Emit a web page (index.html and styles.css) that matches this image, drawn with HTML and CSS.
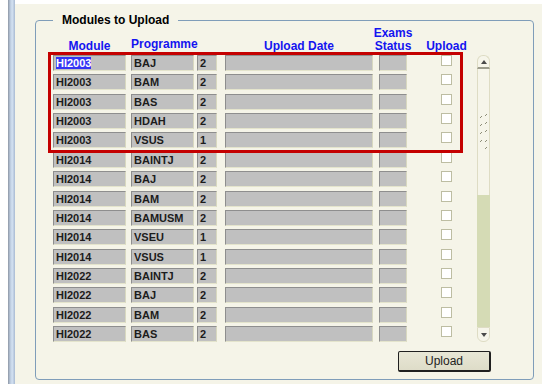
FILE: index.html
```html
<!DOCTYPE html>
<html lang="en">
    <head>
        <meta charset="UTF-8" />
        <meta name="viewport" content="width=device-width, initial-scale=1.0" />
        <title>Modules to Upload</title>

        <link rel="stylesheet" href="styles.css">
    </head>
    <body>
        <div class="frame"></div>
        <main class="panel">
            <fieldset class="group">
                <legend>Modules to Upload</legend>

                <div class="row head">
                    <span class="c-mod">Module</span>
                    <span class="c-prog raised">Programme</span>
                    <span class="c-num"></span>
                    <span class="c-date">Upload Date</span>
                    <span class="c-exam">Exams<br>Status</span>
                    <span class="c-chk">Upload</span>
                </div>

                <div class="body">
                    <div class="list">
                        <div class="row"><span class="cell c-mod"><b class="selected">HI2003</b></span><span class="cell c-prog">BAJ</span><span class="cell c-num">2</span><span class="cell c-date"></span><span class="cell c-exam"></span><span class="c-chk"><i class="box"></i></span></div>
                        <div class="row"><span class="cell c-mod">HI2003</span><span class="cell c-prog">BAM</span><span class="cell c-num">2</span><span class="cell c-date"></span><span class="cell c-exam"></span><span class="c-chk"><i class="box"></i></span></div>
                        <div class="row"><span class="cell c-mod">HI2003</span><span class="cell c-prog">BAS</span><span class="cell c-num">2</span><span class="cell c-date"></span><span class="cell c-exam"></span><span class="c-chk"><i class="box"></i></span></div>
                        <div class="row"><span class="cell c-mod">HI2003</span><span class="cell c-prog">HDAH</span><span class="cell c-num">2</span><span class="cell c-date"></span><span class="cell c-exam"></span><span class="c-chk"><i class="box"></i></span></div>
                        <div class="row"><span class="cell c-mod">HI2003</span><span class="cell c-prog">VSUS</span><span class="cell c-num">1</span><span class="cell c-date"></span><span class="cell c-exam"></span><span class="c-chk"><i class="box"></i></span></div>
                        <div class="row"><span class="cell c-mod">HI2014</span><span class="cell c-prog">BAINTJ</span><span class="cell c-num">2</span><span class="cell c-date"></span><span class="cell c-exam"></span><span class="c-chk"><i class="box"></i></span></div>
                        <div class="row"><span class="cell c-mod">HI2014</span><span class="cell c-prog">BAJ</span><span class="cell c-num">2</span><span class="cell c-date"></span><span class="cell c-exam"></span><span class="c-chk"><i class="box"></i></span></div>
                        <div class="row"><span class="cell c-mod">HI2014</span><span class="cell c-prog">BAM</span><span class="cell c-num">2</span><span class="cell c-date"></span><span class="cell c-exam"></span><span class="c-chk"><i class="box"></i></span></div>
                        <div class="row"><span class="cell c-mod">HI2014</span><span class="cell c-prog">BAMUSM</span><span class="cell c-num">2</span><span class="cell c-date"></span><span class="cell c-exam"></span><span class="c-chk"><i class="box"></i></span></div>
                        <div class="row"><span class="cell c-mod">HI2014</span><span class="cell c-prog">VSEU</span><span class="cell c-num">1</span><span class="cell c-date"></span><span class="cell c-exam"></span><span class="c-chk"><i class="box"></i></span></div>
                        <div class="row"><span class="cell c-mod">HI2014</span><span class="cell c-prog">VSUS</span><span class="cell c-num">1</span><span class="cell c-date"></span><span class="cell c-exam"></span><span class="c-chk"><i class="box"></i></span></div>
                        <div class="row"><span class="cell c-mod">HI2022</span><span class="cell c-prog">BAINTJ</span><span class="cell c-num">2</span><span class="cell c-date"></span><span class="cell c-exam"></span><span class="c-chk"><i class="box"></i></span></div>
                        <div class="row"><span class="cell c-mod">HI2022</span><span class="cell c-prog">BAJ</span><span class="cell c-num">2</span><span class="cell c-date"></span><span class="cell c-exam"></span><span class="c-chk"><i class="box"></i></span></div>
                        <div class="row"><span class="cell c-mod">HI2022</span><span class="cell c-prog">BAM</span><span class="cell c-num">2</span><span class="cell c-date"></span><span class="cell c-exam"></span><span class="c-chk"><i class="box"></i></span></div>
                        <div class="row"><span class="cell c-mod">HI2022</span><span class="cell c-prog">BAS</span><span class="cell c-num">2</span><span class="cell c-date"></span><span class="cell c-exam"></span><span class="c-chk"><i class="box"></i></span></div>

                        <div class="mark"></div>
                    </div>

                    <div class="scroll">
                        <div class="sb-up"><i class="arrow up"></i></div>
                        <div class="sb-thumb">
                            <svg width="9" height="36" viewBox="0 0 9 36">
                                <path d="M1 4 L3 2 M6 2 L8 0 M1 12 L3 10 M6 10 L8 8 M1 20 L3 18 M6 18 L8 16 M1 28 L3 26 M6 28 L8 26 M6 35 L8 33" stroke="#8e8e78" stroke-width="1" fill="none" />
                            </svg>
                        </div>
                        <div class="sb-track"></div>
                        <div class="sb-down"><i class="arrow down"></i></div>
                    </div>
                </div>

                <div class="actions">
                    <button class="upload">Upload</button>
                </div>
            </fieldset>
        </main>
    </body>
</html>
```

FILE: styles.css
```css
body {
    margin: 0px;
    padding: 0px;
    width: 546px;
    height: 384px;
    overflow: hidden;
    display: flex;
    background-color: #ffffff;
    font-family: "Liberation Sans", Arial, sans-serif;
    color: #1c1c1c;
}

.frame {
    margin-left: 8px;
    width: 7px;
    height: 384px;
    background: linear-gradient(to right, #8d96a4, #b9c8dc 30%, #d4e2f2 60%, #a9bad2);
}

.panel {
    margin-top: 4px;
    width: 527px;
    height: 380px;
    box-sizing: border-box;
    padding: 9px 0 0 20px;
    background-color: #f5f4e8;
}

.group {
    margin: 0;
    padding: 0;
    width: 499px;
    height: 367px;
    box-sizing: border-box;
    border: 1px solid #7f9db9;
    border-radius: 4px;
}

.group legend {
    margin-left: 17px;
    padding: 0 9px;
    font-size: 12px;
    font-weight: bold;
    line-height: 15px;
    color: #000000;
}

.row {
    display: flex;
    height: 16px;
    margin-bottom: 3.36px;
}

.head {
    height: 27px;
    margin: 0 0 0 17px;
    align-items: flex-end;
    font-size: 12px;
    font-weight: bold;
    line-height: 13px;
    color: #1414f0;
    text-align: center;
}

.head span {
    padding-bottom: 2px;
}

.head .raised {
    padding-bottom: 4px;
}

.head .c-exam,
.head .c-chk {
    display: flex;
    flex-direction: column;
    align-items: center;
    white-space: nowrap;
}

.c-mod { width: 73px; }
.c-prog { width: 63px; margin-left: 5px; }
.c-num { width: 20px; margin-left: 3px; }
.c-date { width: 148px; margin-left: 8px; }
.c-exam { width: 28px; margin-left: 6px; }
.c-chk { width: 11px; margin-left: 34px; }

.body {
    display: flex;
    margin-left: 17px;
}

.list {
    position: relative;
}

.cell {
    box-sizing: border-box;
    height: 16px;
    padding-left: 2px;
    background-color: #c0c0c0;
    border: 1px solid;
    border-color: #8e8e8e #d8d8c0 #e4e4cc #8e8e8e;
    font-size: 11px;
    font-weight: bold;
    line-height: 14px;
    white-space: nowrap;
}

.selected {
    background-color: #3434f4;
    color: #ffffff;
}

.box {
    display: block;
    width: 11px;
    height: 11px;
    box-sizing: border-box;
    background-color: #ffffff;
    border: 1px solid #bdbda2;
}

.mark {
    position: absolute;
    left: -5px;
    top: -3px;
    width: 415px;
    height: 101px;
    box-sizing: border-box;
    border: 3px solid #c40000;
}

.scroll {
    margin-left: 25px;
    width: 13px;
    height: 287px;
    display: flex;
    flex-direction: column;
}

.sb-up,
.sb-down {
    height: 14px;
    box-sizing: border-box;
    border: 1px solid #dedcc4;
    background-color: #f6f5ea;
    display: flex;
    align-items: center;
    justify-content: center;
}

.sb-up {
    border-radius: 6px 6px 0 0;
    border-bottom: 2px solid #9c9c8c;
}

.sb-down {
    height: 15px;
    border-radius: 0 0 6px 6px;
}

.arrow {
    width: 0;
    height: 0;
    border-left: 3px solid transparent;
    border-right: 3px solid transparent;
}

.arrow.up {
    border-bottom: 4px solid #4a4a4a;
}

.arrow.down {
    border-top: 4px solid #4a4a4a;
}

.sb-thumb {
    height: 126px;
    box-sizing: border-box;
    border-left: 1px solid #dedcc4;
    border-right: 1px solid #dedcc4;
    background-color: #f6f5ea;
    display: flex;
    align-items: center;
    justify-content: center;
}

.sb-track {
    flex: 1;
    background-color: #d5dbb5;
}

.actions {
    display: flex;
    justify-content: flex-end;
    margin: 6px 42px 0 0;
}

.upload {
    width: 93px;
    height: 21px;
    padding: 0;
    box-sizing: border-box;
    border: 1px solid #202020;
    border-right-width: 2px;
    border-bottom-width: 2px;
    border-radius: 2px;
    background: linear-gradient(#e8e7d6, #dedcc8);
    font-family: "Liberation Sans", Arial, sans-serif;
    font-size: 12px;
    color: #222222;
}
```
